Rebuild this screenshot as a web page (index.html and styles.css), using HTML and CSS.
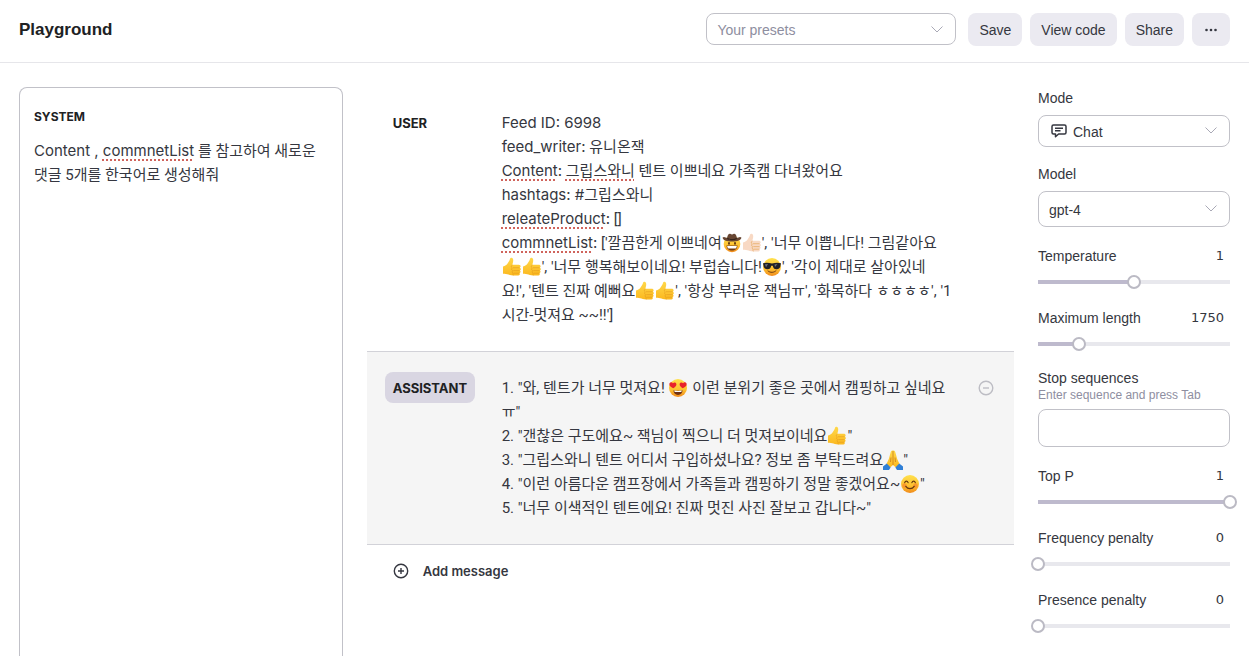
FILE: index.html
```html
<!DOCTYPE html>
<html lang="ko">
<head>
<meta charset="utf-8">
<meta name="viewport" content="width=device-width, initial-scale=1">
<title>Playground</title>
<link rel="stylesheet" href="styles.css">
</head>
<body>
<svg class="sprite" aria-hidden="true">
  <defs>
    <linearGradient id="face-fill" x1="0" y1="0" x2="0" y2="1"><stop offset="0" stop-color="#ffe14d"/><stop offset=".6" stop-color="#fdc02f"/><stop offset="1" stop-color="#f08a1c"/></linearGradient>
    <linearGradient id="hand-fill" x1="0" y1="0" x2="0" y2="1"><stop offset="0" stop-color="#ffd84a"/><stop offset="1" stop-color="#fbb81f"/></linearGradient>
    <symbol id="thumb" viewBox="0 0 20 20">
      <path d="M1 9.6c2.2-.5 3.6-1.6 4.7-3.3L7.400 3.600C8 2.500 7.900 1 9.200.8c1.500-.2 2.200 1.400 2 3.200-.1 1.200-.5 2.300-.9 3.700h6.500c2 0 2.500 2.400.9 3 1.500.5 1.500 2.500.1 2.900 1.100.6 1 2.200-.3 2.600.8.8.3 2.100-1.200 2.200-3.800.4-7.200.3-9.800-.9-1.700-.7-3.400-.8-5.500-.8z"/>
      <path d="M11 10.700h6.500M11.300 13.600h6.200M11.500 16.200h5.800M10.500 8c-1.500.6-1.600 2.300-.2 2.900-1 .9-.8 2.300.3 2.800-.8.9-.5 2 .5 2.500-.5.900-.2 1.700.6 2.200" fill="none" stroke="#d98a18" stroke-opacity=".6" stroke-width=".7"/>
    </symbol>
    <symbol id="cowboy" viewBox="0 0 20 20">
      <circle cx="10" cy="11" r="8.300" fill="url(#face-fill)"/>
      <path d="M.6 4.500c1.500-1.400 3.200.2 4.600.3C5.500 2 6.800.5 8.200.8c.8.300 1.200.6 1.800.6s1-.3 1.800-.6c1.400-.3 2.700 1.200 3 4 1.400-.1 3.100-1.700 4.600-.3-.2 2.700-3.800 4.100-9.400 4.100S.8 7.200.6 4.500z" fill="#674633"/>
      <path d="M5.200 4.800c2.600 1.700 7 1.700 9.600 0v1.300c-2.600 1.600-7 1.600-9.600 0z" fill="#34241d"/>
      <ellipse cx="7" cy="10.400" rx="1" ry="1.400" fill="#613913"/><ellipse cx="13" cy="10.400" rx="1" ry="1.400" fill="#613913"/>
      <path d="M4.500 12.600h11c-.2 3-2.400 5-5.500 5s-5.300-2-5.500-5z" fill="#6e3b13"/><path d="M5.200 13h9.600c0 1.300-.5 2-1.200 2.500H6.400c-.7-.5-1.200-1.200-1.200-2.500z" fill="#fff"/>
    </symbol>
    <symbol id="cool" viewBox="0 0 20 20">
      <circle cx="10" cy="10" r="9" fill="url(#face-fill)"/>
      <path d="M1 6.200c3-.9 6-.6 9 .3 3-.9 6-1.200 9-.3l-.3 1.600c-.5 3.400-1.700 4.500-4.200 4.500-2.300 0-3.200-1.300-3.700-3.600h-1.600c-.5 2.300-1.400 3.600-3.700 3.600-2.500 0-3.700-1.100-4.200-4.500z" fill="#202126"/>
      <path d="M3 7.300l3-.2-2 3.200zM12.500 7.400l3-.3-2.500 3z" fill="#69707b"/>
      <path d="M6 14c2.500 2 5.800 1.800 8-.3" fill="none" stroke="#6e3b13" stroke-width="1" stroke-linecap="round"/>
    </symbol>
    <symbol id="heart-eyes" viewBox="0 0 20 20">
      <circle cx="10" cy="10" r="9" fill="url(#face-fill)"/>
      <path d="M5.200 10.200C2.700 9 1 7.700 1.400 5.700c.4-1.700 2.600-2 3.500-.5 1.200-1.300 3.400-.8 3.500 1 .1 1.700-1.500 3-3.200 4z" fill="#e8222c"/>
      <path d="M14.800 10.200c2.500-1.200 4.200-2.500 3.800-4.500-.4-1.700-2.600-2-3.500-.5-1.200-1.300-3.400-.8-3.500 1-.1 1.700 1.500 3 3.200 4z" fill="#e8222c"/>
      <path d="M5.500 12.200c3 .8 6 .8 9 0 .1 2.600-1.600 4.700-4.500 4.700s-4.600-2.100-4.500-4.700z" fill="#6e3013"/><path d="M6.200 12.600c2.600.6 5 .6 7.600 0l-.5 1.300H6.700z" fill="#fff"/>
    </symbol>
    <symbol id="smile" viewBox="0 0 20 20">
      <circle cx="10" cy="10" r="9" fill="url(#face-fill)"/>
      <circle cx="4.500" cy="11.500" r="2.300" fill="#f5762c" opacity=".55"/><circle cx="15.500" cy="11.500" r="2.300" fill="#f5762c" opacity=".55"/>
      <path d="M4.700 8.600c.6-2 2.700-2 3.400 0M11.900 8.600c.7-2 2.800-2 3.400 0M5.800 12.300c2 3 6.400 3 8.400 0" fill="none" stroke="#65370f" stroke-width="1.200" stroke-linecap="round"/>
    </symbol>
    <symbol id="pray" viewBox="0 0 20 20">
      <path d="M9.800.5C8.600.2 7.900 1 7.600 2.500L5.800 9 3.500 14 6.500 18l3.500-3 3.500 3 3-4-2.300-5L12.400 2.500C12.100 1 11.400.2 10.200.5z" fill="url(#hand-fill)"/>
      <path d="M10 1v14M8 7.500 7.500 12M12 7.500l.5 4.500" fill="none" stroke="#c97b18" stroke-width=".8"/>
      <path d="M3.800 13.500 7.600 17.500 6 20H0v-3.500zM16.200 13.500l-3.800 4L14 20h6v-3.500z" fill="#2f7fd6"/>
    </symbol>
    <symbol id="chevron" viewBox="0 0 12 7"><path d="M.5.5 6 6 11.500.5" fill="none" stroke="currentColor"/></symbol>
  </defs>
</svg>

<header class="topbar">
  <h1 class="topbar__title">Playground</h1>
  <div class="topbar__actions">
    <div class="select select--presets">
      <select class="select__control select__control--muted" aria-label="Your presets"><option>Your presets</option></select>
      <svg class="select__chevron"><use href="#chevron"/></svg>
    </div>
    <div class="button-row">
      <button class="button" type="button">Save</button>
      <button class="button" type="button">View code</button>
      <button class="button" type="button">Share</button>
      <button class="button" type="button" aria-label="More">
        <svg class="button__dots" viewBox="0 0 16 4"><circle cx="3.500" cy="2" r="1.300"/><circle cx="8" cy="2" r="1.300"/><circle cx="12.500" cy="2" r="1.300"/></svg>
      </button>
    </div>
  </div>
</header>

<main class="workspace">
  <section class="system">
    <h2 class="system__title" id="system-title">SYSTEM</h2>
    <div class="prose" contenteditable="true" spellcheck="false" role="textbox" aria-multiline="true" aria-labelledby="system-title"><span class="latin">Content , <span class="typo">commnetList</span></span> 를 참고하여 새로운 댓글 5개를 한국어로 생성해줘</div>
  </section>

  <section class="chat">
    <article class="message">
      <div class="message__side"><button class="role" type="button">USER</button></div>
      <div class="prose message__text" contenteditable="true" spellcheck="false" role="textbox" aria-multiline="true" aria-label="User message"><span class="latin">Feed ID: 6998</span><br><span class="latin">feed_writer:</span> 유니온잭<br><span class="latin"><span class="typo">Content</span>:</span> <span class="typo">그립스와니</span> 텐트 이쁘네요 가족캠 다녀왔어요<br><span class="latin">hashtags: #</span>그립스와니<br><span class="latin"><span class="typo">releateProduct</span>:</span> []<br><span class="latin"><span class="typo">commnetList</span>:</span> ['깔끔한게 이쁘네여<svg class="emoji"><use href="#cowboy"/></svg><svg class="emoji emoji--pale"><use href="#thumb"/></svg>', '너무 이쁩니다! 그림같아요<br><svg class="emoji"><use href="#thumb"/></svg><svg class="emoji"><use href="#thumb"/></svg>', '너무 행복해보이네요! 부럽습니다!<svg class="emoji"><use href="#cool"/></svg>', '각이 제대로 살아있네<br>요!', '텐트 진짜 예뻐요<svg class="emoji"><use href="#thumb"/></svg><svg class="emoji"><use href="#thumb"/></svg>', '항상 부러운 잭님ㅠ', '화목하다 ㅎㅎㅎㅎ', '1<br>시간-멋져요 ~~!!']</div>
    </article>
    <article class="message message--active">
      <div class="message__side"><button class="role role--active" type="button">ASSISTANT</button></div>
      <div class="prose message__text" contenteditable="true" spellcheck="false" role="textbox" aria-multiline="true" aria-label="Assistant message">1. "와, 텐트가 너무 멋져요! <svg class="emoji"><use href="#heart-eyes"/></svg> 이런 분위기 좋은 곳에서 캠핑하고 싶네요<br>ㅠ"<br>2. "갠찮은 구도에요~ 잭님이 찍으니 더 멋져보이네요<svg class="emoji"><use href="#thumb"/></svg>"<br>3. "그립스와니 텐트 어디서 구입하셨나요? 정보 좀 부탁드려요<svg class="emoji"><use href="#pray"/></svg>"<br>4. "이런 아름다운 캠프장에서 가족들과 캠핑하기 정말 좋겠어요~<svg class="emoji"><use href="#smile"/></svg>"<br>5. "너무 이색적인 텐트에요! 진짜 멋진 사진 잘보고 갑니다~"</div>
      <button class="message__remove" type="button" aria-label="Remove message">
        <svg class="icon" viewBox="0 0 16 16"><circle cx="8" cy="8" r="6.800"/><path d="M5 8h6"/></svg>
      </button>
    </article>
    <button class="add" type="button">
      <svg class="icon" viewBox="0 0 16 16"><circle cx="8" cy="8" r="6.700"/><path d="M5 8h6M8 5v6"/></svg>
      Add message
    </button>
  </section>

  <aside class="settings">
    <div class="field">
      <label for="mode">Mode</label>
      <div class="select">
        <svg class="select__icon" viewBox="0 0 16 14"><path d="M2.500 1h11A1.500 1.500 0 0 1 15 2.500v6a1.500 1.500 0 0 1-1.500 1.500H7.600L4.500 12.800V10h-2A1.500 1.500 0 0 1 1 8.500v-6A1.500 1.500 0 0 1 2.500 1zM4 4.200h8M4 6.800h5.500"/></svg>
        <select class="select__control select__control--icon" id="mode"><option>Chat</option></select>
        <svg class="select__chevron"><use href="#chevron"/></svg>
      </div>
    </div>
    <div class="field">
      <label for="model">Model</label>
      <div class="select">
        <select class="select__control select__control--tall" id="model"><option>gpt-4</option></select>
        <svg class="select__chevron"><use href="#chevron"/></svg>
      </div>
    </div>
    <div class="field field--range">
      <div class="field__head"><label for="temperature">Temperature</label><output class="field__value" for="temperature">1</output></div>
      <input class="range" id="temperature" type="range" min="0" max="2" step="0.01" value="1" style="--fill: 50%">
    </div>
    <div class="field field--range">
      <div class="field__head"><label for="length">Maximum length</label><output class="field__value" for="length">1750</output></div>
      <input class="range" id="length" type="range" min="1" max="8191" value="1750" style="--fill: 21.4%">
    </div>
    <div class="field">
      <div class="field__stack"><label for="stop">Stop sequences</label><small class="field__hint" id="stop-hint">Enter sequence and press Tab</small></div>
      <input class="textbox" id="stop" type="text" aria-describedby="stop-hint">
    </div>
    <div class="field field--range">
      <div class="field__head"><label for="top-p">Top P</label><output class="field__value" for="top-p">1</output></div>
      <input class="range" id="top-p" type="range" min="0" max="1" step="0.01" value="1" style="--fill: 100%">
    </div>
    <div class="field field--range">
      <div class="field__head"><label for="frequency">Frequency penalty</label><output class="field__value" for="frequency">0</output></div>
      <input class="range" id="frequency" type="range" min="0" max="2" step="0.01" value="0" style="--fill: 0%">
    </div>
    <div class="field field--range">
      <div class="field__head"><label for="presence">Presence penalty</label><output class="field__value" for="presence">0</output></div>
      <input class="range" id="presence" type="range" min="0" max="2" step="0.01" value="0" style="--fill: 0%">
    </div>
  </aside>
</main>
</body>
</html>
```

FILE: styles.css
```css
:root {
  --text: #353740;
  --strong: #202123;
  --muted: #8e8ea0;
  --line: #c1c1c8;
  --button: #ebeaf1;
  --fill-color: #bebacd;
  --track: #e8e8ed;
}

* { box-sizing: border-box; }

body {
  display: flex;
  flex-direction: column;
  height: 100vh;
  margin: 0;
  overflow: hidden;
  background: #fff;
  color: var(--text);
  font: 14px/20px "Liberation Sans", "Noto Sans CJK KR", sans-serif;
}

button, input, select { font: inherit; color: inherit; }
button { cursor: pointer; border: 0; background: none; padding: 0; }

.sprite { position: absolute; width: 0; height: 0; }

.topbar {
  display: flex;
  flex: none;
  align-items: center;
  justify-content: space-between;
  padding: 13px 19px 16px;
  border-bottom: 1px solid #e6e6ea;
}
.topbar__title {
  margin: 0;
  color: var(--strong);
  font-size: 17px;
  font-weight: 700;
  line-height: 24px;
}
.topbar__actions { display: flex; gap: 12px; }
.button-row { display: flex; gap: 8px; }
.button {
  display: flex;
  align-items: center;
  height: 33px;
  padding: 0 11px;
  border-radius: 8px;
  background: var(--button);
}
.button__dots { width: 16px; height: 4px; fill: var(--text); }

.select { position: relative; }
.select--presets { width: 250px; }
.select__control {
  display: block;
  width: 100%;
  height: 32px;
  padding: 2px 32px 0 10px;
  border: 1px solid var(--line);
  border-radius: 8px;
  background: #fff;
  appearance: none;
}
.select__control--muted { color: var(--muted); }
.select__control--tall { height: 36px; }
.select__control--icon { padding-left: 34px; }
.select__chevron {
  position: absolute;
  top: 50%;
  right: 13px;
  width: 12px;
  height: 7px;
  margin-top: -4px;
  color: #a9a9b6;
  pointer-events: none;
}
.select__icon {
  position: absolute;
  top: 9px;
  left: 13px;
  width: 16px;
  height: 14px;
  fill: none;
  stroke: var(--text);
  stroke-width: 1.5;
  stroke-linejoin: round;
}

.workspace {
  display: grid;
  flex: 1;
  grid-template-columns: minmax(0, 1fr) minmax(0, 2fr) 192px;
  gap: 24px;
  min-height: 0;
  padding: 24px 19px 0;
}

.system {
  padding: 19px 14px;
  border: 1px solid var(--line);
  border-bottom: 0;
  border-radius: 8px 8px 0 0;
}
.system__title {
  margin: 0 0 12px;
  color: var(--strong);
  font: 700 12px/20px Inter, sans-serif;
}

.prose {
  outline: none;
  font: 15px/24px Roboto, "Noto Sans CJK KR", sans-serif;
}
.latin { font-family: Inter, "Noto Sans CJK KR", sans-serif; }
.typo {
  text-decoration: underline dotted #d0645c 2px;
  text-underline-offset: 3px;
  text-decoration-skip-ink: none;
}
.emoji {
  width: 20px;
  height: 20px;
  vertical-align: -5px;
  fill: url(#hand-fill);
}
.emoji--pale { fill: #f8d9c4; }

.message {
  display: grid;
  grid-template-columns: 97px minmax(0, 1fr) 16px;
  column-gap: 20px;
  align-items: start;
  padding: 24px 20px 24px 18px;
}
.message__side { margin: -4px 0; }
.message__text { margin-right: -8px; }
.message__remove { margin-top: 4px; color: #bdbdc4; }
.message--active {
  border: solid #d2d2d8;
  border-width: 1px 0;
  background: #f5f5f5;
}
.role {
  height: 31px;
  padding: 0 8px;
  border-radius: 8px;
  color: var(--strong);
  font: 700 13px/20px Inter, sans-serif;
}
.role--active { background: #d9d6e2; }

.icon {
  display: block;
  width: 16px;
  height: 16px;
  fill: none;
  stroke: currentColor;
  stroke-width: 1.4;
}

.add {
  display: flex;
  align-items: center;
  gap: 14px;
  padding: 16px 26px;
  font: 600 13px/20px Inter, sans-serif;
}

.settings {
  display: flex;
  flex-direction: column;
  gap: 17px;
  padding-top: 1px;
}
.field {
  display: flex;
  flex-direction: column;
  gap: 7px;
}
.field--range { gap: 9px; padding-top: 2px; }
.field__head {
  display: flex;
  justify-content: space-between;
  padding-right: 6px;
}
.field__value { font: 13px/20px "DejaVu Sans", sans-serif; }
.field__stack { display: flex; flex-direction: column; }
.field__hint { color: var(--muted); font-size: 12px; line-height: 14px; }
.textbox {
  width: 100%;
  height: 38px;
  padding: 0 10px;
  border: 1px solid var(--line);
  border-radius: 8px;
  background: #fff;
}

.range {
  width: calc(100% + 14px);
  height: 14px;
  margin: 0 -7px;
  background: none;
  appearance: none;
}
.range::-webkit-slider-runnable-track {
  height: 4px;
  background: linear-gradient(to right, var(--fill-color) var(--fill), var(--track) var(--fill)) center / calc(100% - 14px) 4px no-repeat;
}
.range::-webkit-slider-thumb {
  width: 14px;
  height: 14px;
  margin-top: -5px;
  border: 2px solid #bbbac4;
  border-radius: 50%;
  background: #fff;
  appearance: none;
}
```
